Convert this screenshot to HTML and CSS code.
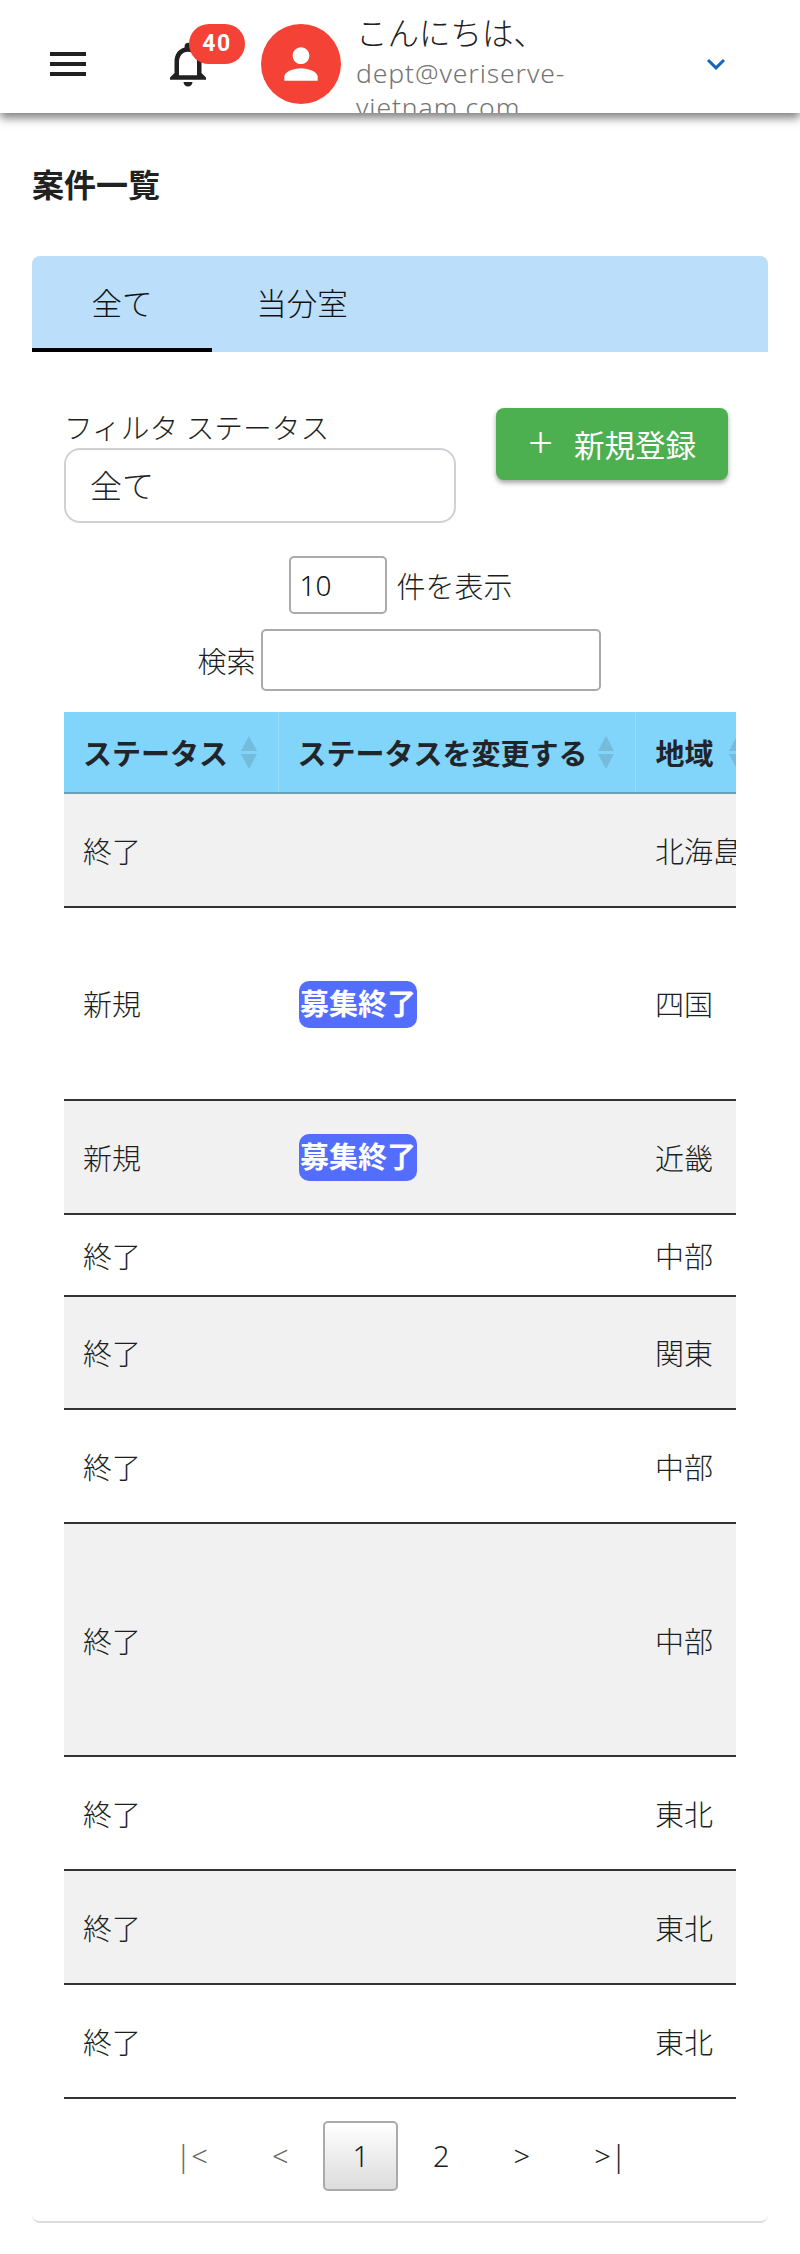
FILE: index.html
```html
<!DOCTYPE html>
<html lang="ja">
<head>
<meta charset="utf-8">
<title>案件一覧</title>
<link rel="stylesheet" href="styles.css">
</head>
<body>
<header class="topbar">
  <button class="icon-btn menu-btn" aria-label="menu">
    <svg viewBox="0 0 24 24" class="menu-icon"><path d="M3 18h18v-2H3v2zm0-5h18v-2H3v2zm0-7v2h18V6H3z"/></svg>
  </button>
  <div class="bell">
    <svg viewBox="0 0 24 24" class="bell-icon"><path d="M12 22c1.1 0 2-.9 2-2h-4c0 1.1.9 2 2 2zm6-6v-5c0-3.07-1.63-5.64-4.5-6.32V4c0-.83-.67-1.5-1.5-1.5s-1.5.67-1.5 1.5v.68C7.64 5.36 6 7.92 6 11v5l-2 2v1h16v-1l-2-2zm-2 1H8v-6c0-2.48 1.51-4.5 4-4.5s4 2.02 4 4.5v6z"/></svg>
    <span class="badge">40</span>
  </div>
  <div class="avatar">
    <svg viewBox="0 0 24 24" class="person-icon"><path d="M12 12c2.21 0 4-1.79 4-4s-1.79-4-4-4-4 1.79-4 4 1.79 4 4 4zm0 2c-2.67 0-8 1.34-8 4v2h16v-2c0-2.66-5.33-4-8-4z"/></svg>
  </div>
  <div class="user">
    <div class="greeting">こんにちは、</div>
    <div class="email">dept@veriserve-vietnam.com</div>
  </div>
  <svg viewBox="0 0 24 24" class="chevron"><path d="M16.59 8.59L12 13.17 7.41 8.59 6 10l6 6 6-6z"/></svg>
</header>

<main class="page">
  <h1 class="title">案件一覧</h1>
  <section class="card">
    <nav class="tabs">
      <div class="tab tab-active">全て</div>
      <div class="tab">当分室</div>
    </nav>
    <div class="panel">
      <div class="filter-row">
        <div class="filter">
          <label class="filter-label" for="status">フィルタ ステータス</label>
          <select id="status" class="filter-select"><option>全て</option></select>
        </div>
        <button class="add-btn"><span class="plus">+</span><span>新規登録</span></button>
      </div>
      <div class="length-row"><input class="length-input" value="10"><span>件を表示</span></div>
      <div class="search-row"><span>検索</span><input class="search-input"></div>
      <div class="table-wrap">
        <table class="grid">
          <thead>
            <tr>
              <th class="col-status"><span class="th-in">ステータス<span class="sort"><i class="up"></i><i class="down"></i></span></span></th>
              <th class="col-change"><span class="th-in">ステータスを変更する<span class="sort"><i class="up"></i><i class="down"></i></span></span></th>
              <th class="col-region"><span class="th-in">地域<span class="sort"><i class="up"></i><i class="down"></i></span></span></th>
            </tr>
          </thead>
          <tbody>
            <tr class="odd h-a"><td>終了</td><td></td><td>北海島</td></tr>
            <tr class="h-b"><td>新規</td><td><span class="tag">募集終了</span></td><td>四国</td></tr>
            <tr class="odd h-a"><td>新規</td><td><span class="tag">募集終了</span></td><td>近畿</td></tr>
            <tr class="h-c"><td>終了</td><td></td><td>中部</td></tr>
            <tr class="odd h-a"><td>終了</td><td></td><td>関東</td></tr>
            <tr class="h-a"><td>終了</td><td></td><td>中部</td></tr>
            <tr class="odd h-d"><td>終了</td><td></td><td>中部</td></tr>
            <tr class="h-a"><td>終了</td><td></td><td>東北</td></tr>
            <tr class="odd h-a"><td>終了</td><td></td><td>東北</td></tr>
            <tr class="h-a"><td>終了</td><td></td><td>東北</td></tr>
          </tbody>
        </table>
      </div>
      <div class="pager">
        <span class="pg pg-off">|&lt;</span>
        <span class="pg pg-off">&lt;</span>
        <span class="pg pg-cur">1</span>
        <span class="pg">2</span>
        <span class="pg">&gt;</span>
        <span class="pg">&gt;|</span>
      </div>
    </div>
  </section>
</main>
</body>
</html>
```
FILE: styles.css
```css
* { box-sizing: border-box; }
html, body { margin: 0; padding: 0; background: #fff; }
body {
  font-family: "Noto Sans", "Noto Sans CJK JP", sans-serif;
  font-size: 29px;
  font-weight: 300;
  color: #1c1f22;
}
.topbar {
  position: relative;
  z-index: 2;
  height: 113px;
  display: flex;
  align-items: center;
  background: #fff;
  overflow: hidden;
  padding: 15px 0 0 44px;
  box-shadow: 0 5px 9px rgba(0,0,0,.5);
}
.icon-btn { border: 0; background: none; padding: 0; display: flex; }
.menu-icon { width: 48px; height: 48px; fill: #212121; display: block; }
.bell { position: relative; margin-left: 69px; width: 54px; height: 54px; }
.bell-icon { width: 54px; height: 54px; fill: #212121; display: block; }
.badge {
  position: absolute;
  left: 28px;
  top: -13px;
  width: 56px;
  height: 40px;
  border-radius: 20px;
  background: #f44336;
  color: #fff;
  font: 700 23px/40px Roboto, sans-serif;
  letter-spacing: 1.5px;
  text-align: center;
}
.avatar {
  width: 80px;
  height: 80px;
  margin-left: 46px;
  border-radius: 50%;
  background: #f44336;
  display: flex;
  align-items: center;
  justify-content: center;
  flex: none;
}
.person-icon { width: 50px; height: 50px; fill: #fff; }
.user { width: 240px; margin: -15px 0 0 15px; align-self: flex-start; padding-top: 10px; }
.greeting { font-size: 31.5px; line-height: 46px; color: #212121; }
.email { font-size: 26.5px; line-height: 34px; color: #757575; letter-spacing: .9px; }
.chevron { width: 36px; height: 36px; fill: #1565c0; margin-left: 102px; flex: none; }

.page { padding: 0 32px 32px; position: relative; }
.title { margin: 0; padding: 48px 0 0; font-size: 32px; line-height: 47px; font-weight: 700; color: #212121; height: 143px; }
.card {
  border-radius: 8px;
  background: #fff;
  border-bottom: 2px solid #ddd;
}
.tabs { display: flex; height: 96px; background: #bbdefb; border-radius: 8px 8px 0 0; font-size: 30.5px; }
.tab { width: 180px; height: 96px; display: flex; align-items: center; justify-content: center; color: #111; padding-bottom: 4px; }
.tab-active { border-bottom: 4px solid #000; padding-bottom: 0; }
.panel { padding: 56px 32px 30px; }
.filter-row { display: flex; }
.filter { width: 392px; }
.filter-label { display: block; line-height: 40px; font-size: 28.7px; }
.filter-select {
  display: block;
  width: 392px;
  height: 75px;
  appearance: none;
  border: 2px solid #d0d0d5;
  border-radius: 16px;
  background: #fff;
  font: inherit;
  font-size: 32px;
  color: #212529;
  padding: 0 24px;
}
.add-btn {
  width: 232px;
  height: 72px;
  margin-left: 40px;
  display: flex;
  align-items: center;
  justify-content: center;
  gap: 21px;
  background: #4caf50;
  color: #fff;
  border: 0;
  border-radius: 8px;
  font: inherit;
  font-size: 30.5px;
  font-weight: 400;
  box-shadow: 0 3px 5px rgba(0,0,0,.35);
  padding: 0;
}
.plus { font-size: 44px; line-height: 1; font-weight: 300; position: relative; top: -3px; }
.length-row { display: flex; justify-content: center; align-items: center; gap: 9px; margin-top: 33px; margin-left: 2px; }
.length-input {
  width: 98px;
  height: 58px;
  border: 2px solid #aaa;
  border-radius: 5px;
  font: inherit;
  font-size: 28px;
  padding: 0 8px;
  color: #111;
}
.search-row { display: flex; justify-content: center; align-items: center; gap: 5px; margin-top: 15px; margin-right: 2px; }
.search-input { width: 340px; height: 62px; border: 2px solid #aaa; border-radius: 5px; }
.table-wrap { margin-top: 21px; width: 672px; overflow: hidden; }
.grid { border-collapse: collapse; table-layout: fixed; width: 872px; }
.col-status { width: 214px; }
.col-change { width: 357px; }
.col-region { width: 301px; }
.grid th {
  height: 81px;
  background: #81d4fa;
  text-align: left;
  font-weight: 700;
  padding: 0 0 0 19px;
  color: #212529;
  border-bottom: 2px solid #6a9fb8;
  border-right: 1px solid #9bdcf9;
}
.th-in { display: flex; align-items: center; justify-content: space-between; padding-right: 21px; }
.grid th.col-region { padding-left: 20px; }
.col-region .th-in { justify-content: flex-start; gap: 15px; }
.sort { display: flex; flex-direction: column; gap: 3px; flex: none; }
.sort i { display: block; width: 0; height: 0; border-left: 8.5px solid transparent; border-right: 8.5px solid transparent; }
.sort .up { border-bottom: 15px solid #74bbdc; }
.sort .down { border-top: 15px solid #74bbdc; }
.grid td {
  padding: 0 0 0 19px;
  border-bottom: 2px solid #333;
  vertical-align: middle;
  white-space: nowrap;
  overflow: hidden;
}
.grid td:nth-child(2) { padding-left: 21px; }
.grid td:nth-child(3) { padding-left: 20px; }
.odd td { background: #f1f1f1; }
.h-a td { height: 113.8px; }
.h-b td { height: 193px; }
.h-c td { height: 82px; }
.h-d td { height: 233px; }
.tag {
  display: inline-block;
  width: 118px;
  height: 47px;
  line-height: 45px;
  border-radius: 10px;
  background: #536dfe;
  color: #fff;
  font-weight: 700;
  text-align: center;
  vertical-align: middle;
  position: relative;
  top: 1px;
}
.pager { display: flex; justify-content: center; align-items: center; gap: 6px; margin: 22px 0 0 2px; height: 70px; }
.pg { height: 70px; padding: 0 27px; border: 2px solid transparent; border-radius: 5px; display: flex; align-items: center; }
.pg-off { color: #666; }
.pg-cur { background: linear-gradient(#fff, #dcdcdc); border-color: #aaa; }
```
